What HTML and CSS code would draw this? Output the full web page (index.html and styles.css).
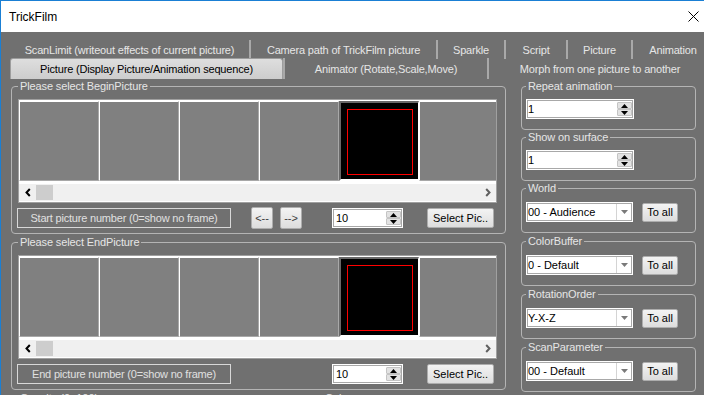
FILE: index.html
```html
<!DOCTYPE html>
<html lang="en">
<head>
  <meta charset="UTF-8">
  <title>TrickFilm</title>
  <link rel="stylesheet" href="styles.css">
</head>
<body>
  <div class="window">
    <!-- Title bar -->
    <div class="titlebar">
      <span>TrickFilm</span>
      <svg class="close" width="11" height="11" viewBox="0 0 11 11"><path d="M0.5 0.5L10.5 10.5M10.5 0.5L0.5 10.5" stroke="#000" stroke-width="1"/></svg>
    </div>

    <div class="client">
      <!-- Tabs -->
      <div class="tabrow">
        <div class="tab t-scan">ScanLimit (writeout effects of current picture)</div>
        <div class="tab t-cam">Camera path of TrickFilm picture</div>
        <div class="tab t-sparkle">Sparkle</div>
        <div class="tab t-script">Script</div>
        <div class="tab t-pic">Picture</div>
        <div class="tab t-anim last">Animation</div>
      </div>
      <div class="tabrow second">
        <div class="tab active">Picture (Display Picture/Animation sequence)</div>
        <div class="tab t-animator">Animator (Rotate,Scale,Move)</div>
        <div class="tab t-morph last">Morph from one picture to another</div>
      </div>

      <div class="content">
        <!-- Left column -->
        <div class="left">
          <fieldset class="group pic-group">
            <legend>Please select BeginPicture</legend>
            <div class="strip">
              <div class="cells">
                <div class="cell"></div>
                <div class="cell"></div>
                <div class="cell"></div>
                <div class="cell"></div>
                <div class="cell current"><div class="frame"></div></div>
                <div class="cell"></div>
              </div>
              <div class="scrollbar">
                <div class="sb-btn"><svg width="6" height="9" viewBox="0 0 6 9"><path d="M4.8 1L1.5 4.5L4.8 8" stroke="#000" stroke-width="2" fill="none"/></svg></div>
                <div class="sb-thumb"></div>
                <div class="sb-track"></div>
                <div class="sb-btn"><svg width="6" height="9" viewBox="0 0 6 9"><path d="M1.2 1L4.5 4.5L1.2 8" stroke="#606060" stroke-width="2" fill="none"/></svg></div>
              </div>
            </div>
            <div class="controls">
              <div class="caption-box">Start picture number (0=show no frame)</div>
              <div class="nav">
                <button class="btn">&lt;--</button>
                <button class="btn">--&gt;</button>
              </div>
              <div class="spinner">
                <span>10</span>
                <span class="spin">
                  <span class="spin-btn"><svg width="7" height="4" viewBox="0 0 7 4"><path d="M0 4L3.5 0L7 4Z"/></svg></span>
                  <span class="spin-btn"><svg width="7" height="4" viewBox="0 0 7 4"><path d="M0 0L3.5 4L7 0Z"/></svg></span>
                </span>
              </div>
              <button class="btn pick">Select Pic..</button>
            </div>
          </fieldset>

          <fieldset class="group pic-group">
            <legend>Please select EndPicture</legend>
            <div class="strip">
              <div class="cells">
                <div class="cell"></div>
                <div class="cell"></div>
                <div class="cell"></div>
                <div class="cell"></div>
                <div class="cell current"><div class="frame"></div></div>
                <div class="cell"></div>
              </div>
              <div class="scrollbar">
                <div class="sb-btn"><svg width="6" height="9" viewBox="0 0 6 9"><path d="M4.8 1L1.5 4.5L4.8 8" stroke="#000" stroke-width="2" fill="none"/></svg></div>
                <div class="sb-thumb"></div>
                <div class="sb-track"></div>
                <div class="sb-btn"><svg width="6" height="9" viewBox="0 0 6 9"><path d="M1.2 1L4.5 4.5L1.2 8" stroke="#606060" stroke-width="2" fill="none"/></svg></div>
              </div>
            </div>
            <div class="controls">
              <div class="caption-box">End picture number (0=show no frame)</div>
              <div class="nav"></div>
              <div class="spinner">
                <span>10</span>
                <span class="spin">
                  <span class="spin-btn"><svg width="7" height="4" viewBox="0 0 7 4"><path d="M0 4L3.5 0L7 4Z"/></svg></span>
                  <span class="spin-btn"><svg width="7" height="4" viewBox="0 0 7 4"><path d="M0 0L3.5 4L7 0Z"/></svg></span>
                </span>
              </div>
              <button class="btn pick">Select Pic..</button>
            </div>
          </fieldset>

          <div class="below">
            <span class="below-first">Opacity (0..100)</span>
            <span>Color</span>
          </div>
        </div>

        <!-- Right column -->
        <div class="right">
          <fieldset class="group opt-group">
            <legend>Repeat animation</legend>
            <div class="spinner wide">
              <span>1</span>
              <span class="spin">
                <span class="spin-btn"><svg width="7" height="4" viewBox="0 0 7 4"><path d="M0 4L3.5 0L7 4Z"/></svg></span>
                <span class="spin-btn"><svg width="7" height="4" viewBox="0 0 7 4"><path d="M0 0L3.5 4L7 0Z"/></svg></span>
              </span>
            </div>
          </fieldset>

          <fieldset class="group opt-group">
            <legend>Show on surface</legend>
            <div class="spinner wide">
              <span>1</span>
              <span class="spin">
                <span class="spin-btn"><svg width="7" height="4" viewBox="0 0 7 4"><path d="M0 4L3.5 0L7 4Z"/></svg></span>
                <span class="spin-btn"><svg width="7" height="4" viewBox="0 0 7 4"><path d="M0 0L3.5 4L7 0Z"/></svg></span>
              </span>
            </div>
          </fieldset>

          <fieldset class="group sel-group">
            <legend>World</legend>
            <div class="sel-row">
              <div class="dropdown"><span>00 - Audience</span><span class="dd-arrow"><svg width="7" height="4" viewBox="0 0 7 4"><path d="M0 0L3.5 4L7 0Z" fill="#7a7a7a"/></svg></span></div>
              <button class="btn toall">To all</button>
            </div>
          </fieldset>

          <fieldset class="group sel-group">
            <legend>ColorBuffer</legend>
            <div class="sel-row">
              <div class="dropdown"><span>0 - Default</span><span class="dd-arrow"><svg width="7" height="4" viewBox="0 0 7 4"><path d="M0 0L3.5 4L7 0Z" fill="#7a7a7a"/></svg></span></div>
              <button class="btn toall">To all</button>
            </div>
          </fieldset>

          <fieldset class="group sel-group">
            <legend>RotationOrder</legend>
            <div class="sel-row">
              <div class="dropdown"><span>Y-X-Z</span><span class="dd-arrow"><svg width="7" height="4" viewBox="0 0 7 4"><path d="M0 0L3.5 4L7 0Z" fill="#7a7a7a"/></svg></span></div>
              <button class="btn toall">To all</button>
            </div>
          </fieldset>

          <fieldset class="group sel-group">
            <legend>ScanParameter</legend>
            <div class="sel-row">
              <div class="dropdown"><span>00 - Default</span><span class="dd-arrow"><svg width="7" height="4" viewBox="0 0 7 4"><path d="M0 0L3.5 4L7 0Z" fill="#7a7a7a"/></svg></span></div>
              <button class="btn toall">To all</button>
            </div>
          </fieldset>

          <fieldset class="group opt-group">
            <legend>DepthCoef (1..1)</legend>
            <div class="spinner wide"><span>1</span></div>
          </fieldset>
        </div>
      </div>
    </div>
  </div>
</body>
</html>
```

FILE: styles.css
```css
body {
  margin: 0;
  font-family: "Liberation Sans", Arial, sans-serif;
  font-size: 11px;
}

.window {
  width: 704px;
  height: 395px;
  box-sizing: border-box;
  border-top: 1px solid #1a7fd4;
  border-left: 1px solid #1a7fd4;
  background: #707070;
  overflow: hidden;
}

.titlebar {
  height: 31px;
  background: #fff;
  display: flex;
  align-items: center;
  justify-content: space-between;
  padding: 0 5px 0 8px;
  font-size: 12px;
  color: #000;
}

.client {
  padding: 8px 0 0 9px;
}

/* Tabs */
.tabrow {
  display: flex;
  height: 19px;
  white-space: nowrap;
  color: #e6e6e6;
  letter-spacing: -0.18px;
}

.tab {
  flex: none;
  box-sizing: border-box;
  text-align: center;
  line-height: 21px;
  border-right: 2px solid #a9a9a9;
}

.tab.last {
  border-right: none;
}

.t-scan { width: 241px; }
.t-cam { width: 187px; }
.t-sparkle { width: 68px; }
.t-script { width: 62px; }
.t-pic { width: 65px; }
.t-anim { width: 80px; }

.tabrow.second {
  height: 21px;
  margin-top: -1px;
}

.tabrow.second .tab {
  line-height: 22px;
}

.tabrow.second .tab.active {
  width: 273px;
  background: linear-gradient(#dedede, #cdcdcd);
  color: #000;
  border: 1px solid #9d9d9d;
  border-bottom: none;
  border-radius: 3px 3px 0 0;
  line-height: 20px;
}

.t-animator {
  width: 206px;
  border-left: 2px solid #a9a9a9;
}

.t-morph { width: 222px; }

/* Layout */
.content {
  display: flex;
  gap: 15px;
  margin-left: 1px;
}

.left {
  width: 495px;
  flex: none;
}

.right {
  width: 175px;
  flex: none;
}

fieldset.group {
  margin: 0;
  min-width: 0;
  border: 1px solid #b4b4b4;
  border-radius: 4px;
}

.group legend {
  padding: 0 2px;
  line-height: 14px;
  color: #e6e6e6;
  letter-spacing: -0.12px;
}

.pic-group {
  padding: 6px 8px 4px 6px;
}

.pic-group + .pic-group {
  margin-top: 1px;
}

/* Picture strip */
.strip {
  border: 1px solid #a0a0a0;
  background: #fff;
  height: 102px;
  overflow: hidden;
}

.cells {
  display: flex;
  margin-top: 1px;
  height: 80px;
}

.cell {
  flex: none;
  width: 80px;
  height: 80px;
  box-sizing: border-box;
  background: #808080;
  border: 1px solid;
  border-color: #fff #a8a8a8 #a8a8a8 #fff;
}

.cell.current {
  background: #000;
  border-width: 2px 1px 2px 2px;
  border-color: #686868 #fff #fff #686868;
}

.frame {
  width: 66px;
  height: 66px;
  box-sizing: border-box;
  border: 1px solid #f00;
  margin: 6px 0 0 6px;
}

.scrollbar {
  display: flex;
  align-items: center;
  height: 17px;
  margin-top: 3px;
  background: #f0f0f0;
}

.sb-btn {
  flex: none;
  width: 17px;
  height: 17px;
  display: flex;
  align-items: center;
  justify-content: center;
}

.sb-thumb {
  flex: none;
  width: 17px;
  height: 15px;
  background: #cdcdcd;
}

.sb-track {
  flex: 1;
}

/* Controls under the strip */
.controls {
  display: flex;
  align-items: center;
  height: 22px;
  margin-top: 4px;
}

.caption-box {
  flex: none;
  width: 214px;
  height: 20px;
  margin-left: -1px;
  box-sizing: border-box;
  border: 1px solid #d8d8d8;
  color: #e0e0e0;
  text-align: center;
  line-height: 18px;
  letter-spacing: -0.2px;
}

.nav {
  flex: none;
  display: flex;
  gap: 7px;
  width: 51px;
  margin-left: 20px;
}

.btn {
  box-sizing: border-box;
  border: 1px solid #adadad;
  border-radius: 2px;
  background: linear-gradient(#f3f3f3, #dddddd);
  color: #000;
  font: inherit;
  text-align: center;
  padding: 0;
}

.nav .btn {
  width: 22px;
  height: 22px;
  color: #3c3c3c;
}

.spinner {
  flex: none;
  box-sizing: border-box;
  width: 71px;
  height: 20px;
  margin-left: 30px;
  padding: 0 1px 0 3px;
  background: #fff;
  border: 1px solid #fff;
  box-shadow: inset 0 0 0 1px #a8a8a8;
  display: flex;
  align-items: center;
  justify-content: space-between;
  color: #000;
}

.spin {
  display: flex;
  flex-direction: column;
  width: 15px;
}

.spin-btn {
  height: 7px;
  box-sizing: border-box;
  background: #e2e2e2;
  border: 1px solid #c4c4c4;
  border-radius: 1px;
  display: flex;
  align-items: center;
  justify-content: center;
}

.pick {
  width: 67px;
  height: 20px;
  margin-left: 24px;
}

.below {
  display: flex;
  padding: 1px 0 0 9px;
  line-height: 14px;
  color: #e6e6e6;
}

.below-first {
  width: 305px;
}

/* Right column groups */
.opt-group {
  padding: 6px 5px 10px 4px;
}

.sel-group {
  padding: 7px 5px 10px 4px;
  margin-bottom: 1px !important;
}

.spinner.wide {
  width: 108px;
  margin-left: 0;
  padding-left: 1px;
}

.sel-row {
  display: flex;
  align-items: center;
  height: 20px;
}

.dropdown {
  flex: none;
  box-sizing: border-box;
  width: 107px;
  height: 20px;
  padding-left: 1px;
  background: #fff;
  border: 1px solid #fff;
  box-shadow: inset 0 0 0 1px #a8a8a8;
  display: flex;
  align-items: center;
  justify-content: space-between;
  color: #000;
}

.dd-arrow {
  width: 15px;
  height: 16px;
  border-left: 1px solid #d4d4d4;
  display: flex;
  align-items: center;
  justify-content: center;
}

.toall {
  width: 36px;
  height: 19px;
  margin-left: 9px;
}
```
